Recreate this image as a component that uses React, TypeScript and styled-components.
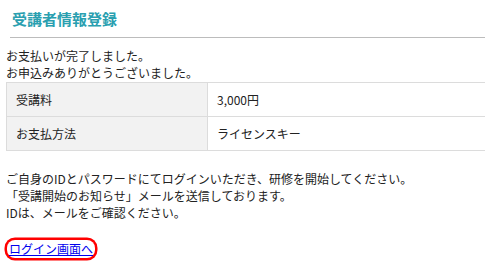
import React from "react";
import styled, { createGlobalStyle } from "styled-components";

const Global = createGlobalStyle`
  html, body { margin: 0; padding: 0; background: #fff; }
  body { font-family: "Noto Sans CJK JP", "Noto Sans", sans-serif; color: #222; font-size: 12px; overflow: hidden; }
`;

const Page = styled.div`
  width: 485px;
  height: 261px;
  padding-left: 6px;
  box-sizing: border-box;
  overflow: hidden;
`;

const TitleBar = styled.div`
  margin-left: 4px;
  padding: 8px 0 8px 2px;
  border-bottom: 1px solid #bcbcbc;
`;

const Title = styled.h2`
  margin: 0;
  font-size: 15px;
  line-height: 21px;
  font-weight: bold;
  color: #2a9fb0;
`;

const Para = styled.p<{ $top: number }>`
  margin: ${(p) => p.$top}px 0 0;
  font-size: 12px;
  line-height: 17px;
`;

const Table = styled.table`
  margin-top: 1px;
  width: calc(100% + 2px);
  border-collapse: collapse;
`;

const Th = styled.th`
  width: 191px;
  background: #f2f2f2;
  border: 1px solid #dcdcdc;
  padding: 0 0 0 9px;
  height: 33px;
  text-align: left;
  font-weight: normal;
  font-size: 12px;
`;

const Td = styled.td`
  border: 1px solid #dcdcdc;
  padding: 0 0 0 9px;
  height: 33px;
  font-size: 12px;
`;

const LinkRow = styled.div`
  margin-top: 19px;
  line-height: 17px;
  padding-left: 1px;
`;

const LoginLink = styled.a`
  color: #0000ee;
  text-decoration: underline;
  font-size: 12px;
  border-radius: 8px;
  box-shadow: 0 0 0 2.5px #ff0000;
  padding: 0 2px 1px;
`;

export default function App() {
  return (
    <>
      <Global />
      <Page>
        <TitleBar>
          <Title>受講者情報登録</Title>
        </TitleBar>
        <Para $top={9}>
          お支払いが完了しました。
          <br />
          お申込みありがとうございました。
        </Para>
        <Table>
          <tbody>
            <tr>
              <Th>受講料</Th>
              <Td>3,000円</Td>
            </tr>
            <tr>
              <Th>お支払方法</Th>
              <Td>ライセンスキー</Td>
            </tr>
          </tbody>
        </Table>
        <Para $top={19}>
          ご自身のIDとパスワードにてログインいただき、研修を開始してください。
          <br />
          「受講開始のお知らせ」メールを送信しております。
          <br />
          IDは、メールをご確認ください。
        </Para>
        <LinkRow>
          <LoginLink href="#">ログイン画面へ</LoginLink>
        </LinkRow>
      </Page>
    </>
  );
}
